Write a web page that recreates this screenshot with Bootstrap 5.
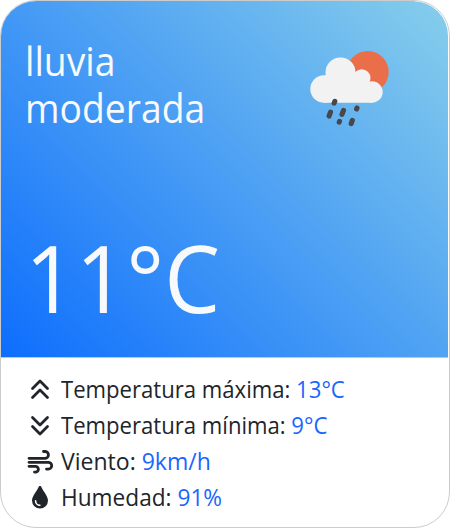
<!DOCTYPE html>
<html lang="es">
<head>
<meta charset="utf-8">
<meta name="viewport" content="width=device-width, initial-scale=1">
<title>El tiempo</title>
<link href="https://cdn.jsdelivr.net/npm/bootstrap@5.3.0/dist/css/bootstrap.min.css" rel="stylesheet">
<style>
body{font-family:"Open Sans","Noto Sans",sans-serif;background:#fff}
.weather{height:528px;border:1px solid #ccc;border-radius:36px}
.weather-top{height:357px;margin-right:1px;border-top-right-radius:35px;padding:36px 24px 0;background:linear-gradient(45deg,#0d6efd,#87ceeb);background-clip:padding-box;border-bottom:1px solid #b9cbdc}
.weather-name{width:230px;font-size:40px;line-height:47px;font-weight:400}
.weather-name span,.degrees span,.stat span{display:block;transform-origin:0 50%;transform:scaleX(.932)}
.degrees{font-size:94px;line-height:96px;font-weight:400;margin-top:98px}
.degrees span{transform:scaleX(.943)}
.weather-icon{margin:3px 35px 0 0}
.weather-stats{padding:14px 24px 0}
.stat{height:36px;font-size:23.5px;line-height:32px;white-space:nowrap;font-weight:370}
.stat span{padding-bottom:2px}
.stat svg{width:30px;height:30px;margin-right:6px;flex:none}
.stat b{font-weight:inherit;color:#1a66ff}
.stat .wind-text{transform:scaleX(.98)}
.stat .humidity-text{transform:scaleX(.964)}
.stat .temp-text{transform:scaleX(.941)}
</style>
<script src="https://cdn.jsdelivr.net/npm/bootstrap@5.3.0/dist/js/bootstrap.bundle.min.js"></script>
</head>
<body>
<main class="card weather overflow-hidden">
  <section class="weather-top text-light">
    <div class="d-flex justify-content-between align-items-start">
      <h1 class="weather-name mb-0"><span>lluvia</span><span>moderada</span></h1>
      <svg class="weather-icon" width="80" height="90" viewBox="9 0 80 90" aria-hidden="true">
        <circle cx="67.7" cy="32" r="21" fill="#eb6e4b"/>
        <g fill="#f2f2f2"><circle cx="40.5" cy="32.4" r="15"/><circle cx="24" cy="49" r="13.7"/><circle cx="72" cy="52" r="10.7"/><circle cx="61.7" cy="38" r="8.8"/><path d="M24 36L40 30 60 37 72 44V62.7H24z"/></g>
        <g stroke="#48484a" stroke-width="5.1" stroke-linecap="round"><path d="M34.8 61.3l-.7 1.8M30.5 72.2l-1.4 3.8M43.5 70.4l-1.5 4M57 68l-.4 1M39.5 81.4l-.3.8M52.3 80.4l-1.1 3.2"/></g>
      </svg>
    </div>
    <div class="degrees"><span>11°C</span></div>
  </section>
  <section class="weather-stats">
    <div class="stat d-flex align-items-center"><svg viewBox="0 0 30 30" fill="none" stroke="#212529" stroke-width="2.8" stroke-linecap="round" stroke-linejoin="round"><path d="M7.500 13.500L15 6l7.500 7.500M7.500 22.500L15 15l7.500 7.500"/></svg><span class="temp-text">Temperatura máxima: <b>13°C</b></span></div>
    <div class="stat d-flex align-items-center"><svg viewBox="0 0 30 30" fill="none" stroke="#212529" stroke-width="2.8" stroke-linecap="round" stroke-linejoin="round"><path d="M7.500 6.500L15 14l7.500-7.500M7.500 15.500L15 23l7.500-7.500"/></svg><span class="temp-text">Temperatura mínima: <b>9°C</b></span></div>
    <div class="stat d-flex align-items-center"><svg viewBox="0 0 30 30" fill="none" stroke="#212529" stroke-width="2.8" stroke-linecap="round"><path d="M4 11.300H19.800a3.400 3.400 0 0 0 .5-6.800H18.500M4 15.300H23.300a3.400 3.400 0 0 1 0 6.800H21.500M4 19.300H10.500a2.900 2.900 0 0 1 0 5.800H9.500"/></svg><span class="wind-text">Viento: <b>9km/h</b></span></div>
    <div class="stat d-flex align-items-center"><svg viewBox="0 0 30 30"><path d="M15 3c-.8 0-1.200.5-1.500 1.200C11.800 8.400 7 13 7 17.600a8 8 0 0 0 16 0C23 13 18.200 8.400 16.500 4.200 16.200 3.500 15.800 3 15 3z" fill="#212529"/><path d="M10.600 17.900a4.500 4.500 0 0 0 4.300 4.400" fill="none" stroke="#fff" stroke-width="1.600" stroke-linecap="round"/></svg><span class="humidity-text">Humedad: <b>91%</b></span></div>
  </section>
</main>
</body>
</html>
